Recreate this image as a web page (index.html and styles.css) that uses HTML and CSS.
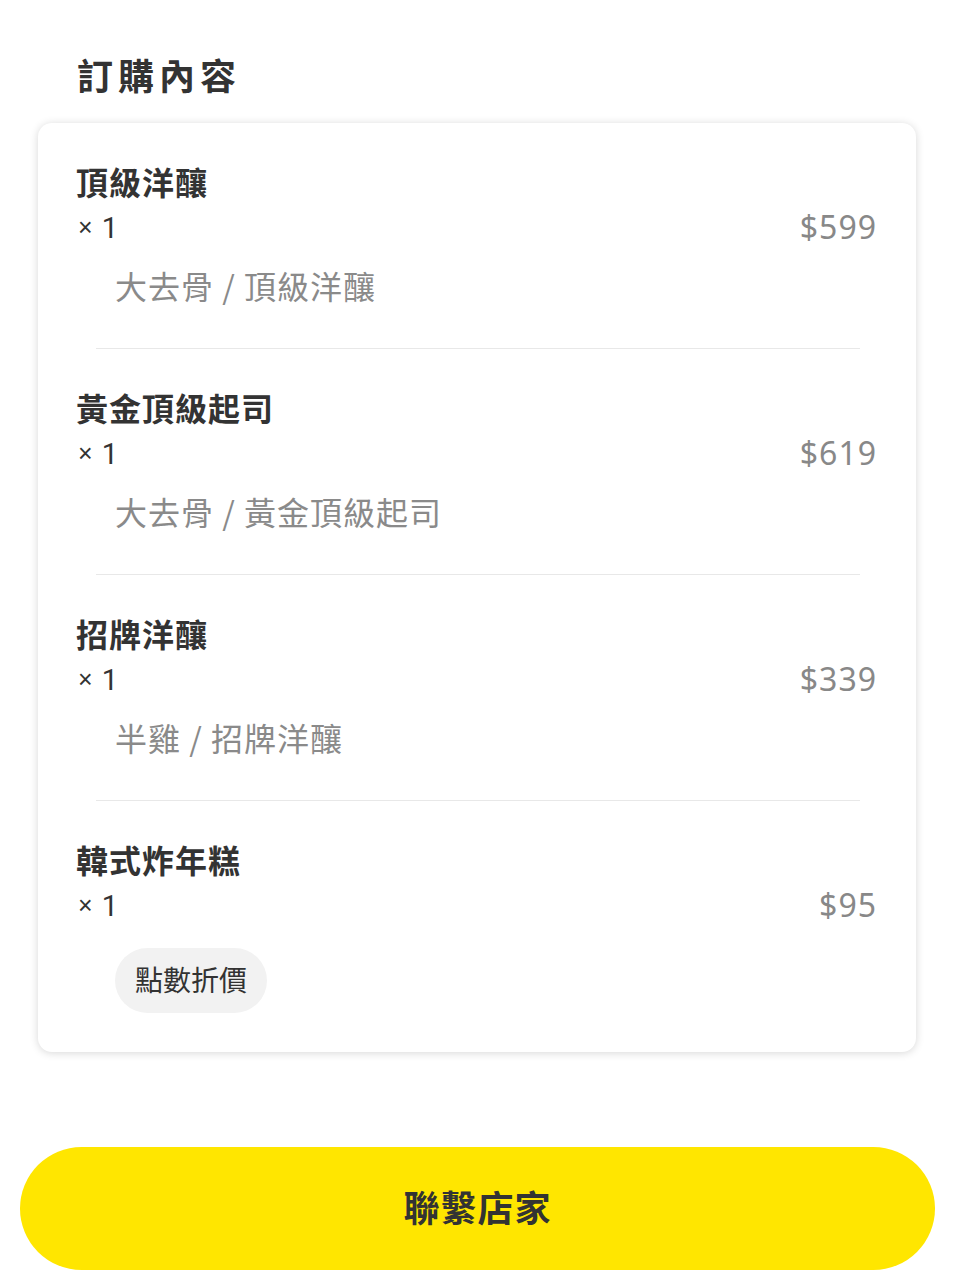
FILE: index.html
```html
<!DOCTYPE html>
<html lang="zh-Hant">
<head>
<meta charset="utf-8">
<link rel="stylesheet" href="styles.css">
</head>
<body>
<div class="page">
  <h1 class="title">訂購內容</h1>
  <div class="card">
    <div class="item">
      <div class="name">頂級洋釀</div>
      <div class="row"><span class="qty"><span class="x">×</span> 1</span><span class="price">$599</span></div>
      <div class="sub">大去骨 / 頂級洋釀</div>
    </div>
    <div class="divider"></div>
    <div class="item">
      <div class="name">黃金頂級起司</div>
      <div class="row"><span class="qty"><span class="x">×</span> 1</span><span class="price">$619</span></div>
      <div class="sub">大去骨 / 黃金頂級起司</div>
    </div>
    <div class="divider"></div>
    <div class="item">
      <div class="name">招牌洋釀</div>
      <div class="row"><span class="qty"><span class="x">×</span> 1</span><span class="price">$339</span></div>
      <div class="sub">半雞 / 招牌洋釀</div>
    </div>
    <div class="divider"></div>
    <div class="item">
      <div class="name">韓式炸年糕</div>
      <div class="row"><span class="qty"><span class="x">×</span> 1</span><span class="price">$95</span></div>
      <div class="tag">點數折價</div>
    </div>
  </div>
  <button class="contact">聯繫店家</button>
</div>
</body>
</html>
```
FILE: styles.css
```css
* { box-sizing: border-box; }
body {
  margin: 0;
  background: #fff;
  font-family: "Noto Sans CJK TC", "Noto Sans", sans-serif;
  color: #333;
}
.page {
  display: flex;
  flex-direction: column;
  padding: 49px 0 0;
}
.title {
  margin: 0 0 24px 77px;
  font-size: 36px;
  line-height: 50px;
  font-weight: 700;
  letter-spacing: 5px;
  color: #333;
}
.card {
  margin: 0 39px 0 38px;
  background: #fff;
  border-radius: 14px;
  box-shadow: 0 1px 8px rgba(0,0,0,0.16);
  display: flex;
  flex-direction: column;
}
.item {
  padding: 36px 39px 41px 38px;
  display: flex;
  flex-direction: column;
}
.item:last-child { padding-bottom: 39px; }
.name {
  font-size: 32px;
  line-height: 44px;
  font-weight: 700;
  letter-spacing: 1px;
  color: #333;
}
.row {
  display: flex;
  justify-content: space-between;
  align-items: center;
  height: 44px;
  margin-top: 1px;
}
.qty {
  font-family: Roboto, "Noto Sans", sans-serif;
  font-size: 29px;
  color: #333;
  padding-left: 2px;
  padding-top: 3px;
}
.x {
  font-family: "Liberation Sans", sans-serif;
  font-size: 25px;
  vertical-align: 2px;
  margin-right: 2px;
}
.price {
  font-family: "Noto Sans", sans-serif;
  font-size: 32px;
  letter-spacing: 1px;
  color: #888;
  padding-top: 1px;
}
.sub {
  margin: 15px 0 0 39px;
  font-size: 32px;
  line-height: 44px;
  letter-spacing: 1px;
  color: #8a8a8a;
}
.tag {
  align-self: flex-start;
  margin: 22px 0 0 39px;
  padding: 0 20px;
  height: 65px;
  line-height: 63px;
  border-radius: 33px;
  background: #f2f2f2;
  font-size: 28px;
  color: #333;
}
.divider {
  height: 1px;
  background: #e8e8e8;
  margin: 0 56px 0 58px;
}
.contact {
  margin: 95px 20px 0;
  height: 123px;
  padding: 0 0 6px;
  border: none;
  border-radius: 62px;
  background: #ffe600;
  font-family: "Noto Sans CJK TC", sans-serif;
  font-size: 36px;
  font-weight: 700;
  letter-spacing: 1px;
  color: #333;
}
```
